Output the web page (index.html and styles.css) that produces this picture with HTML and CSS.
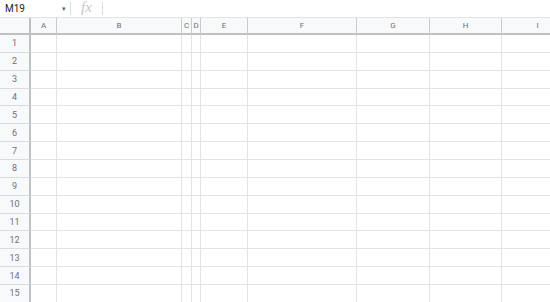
FILE: index.html
```html
<!DOCTYPE html>
<html>
<head>
  <meta charset="UTF-8">
  <title>Sheet</title>
  <link rel="stylesheet" href="styles.css">
</head>
<body>
  <div class="formula-bar">
    <div class="name-box">
      <span class="cell-ref">M19</span>
      <span class="caret">&#9662;</span>
    </div>
    <div class="fx">fx</div>
    <div class="formula-input"></div>
  </div>
  <div class="sheet" id="sheet">
    <div class="corner"></div>
    <div class="col-head">A</div>
    <div class="col-head">B</div>
    <div class="col-head">C</div>
    <div class="col-head">D</div>
    <div class="col-head">E</div>
    <div class="col-head">F</div>
    <div class="col-head">G</div>
    <div class="col-head">H</div>
    <div class="col-head">I</div>
  </div>
  <script>
    var sheet = document.getElementById('sheet');
    for (var r = 1; r <= 15; r++) {
      var head = document.createElement('div');
      head.className = 'row-head';
      head.innerText = r;
      sheet.appendChild(head);
      for (var c = 0; c < 9; c++) {
        var cell = document.createElement('div');
        cell.className = 'cell';
        sheet.appendChild(cell);
      }
    }
  </script>
</body>
</html>
```

FILE: styles.css
```css
body {
  margin: 0;
  padding: 0;
  font-family: Roboto, "Liberation Sans", Arial, sans-serif;
  background: #fff;
  overflow: hidden;
  width: 550px;
  height: 302px;
}
.formula-bar {
  display: flex;
  align-items: center;
  height: 17px;
  border-bottom: 1px solid #e2e3e3;
}
.name-box {
  display: flex;
  align-items: center;
  justify-content: space-between;
  width: 61px;
  height: 13px;
  padding: 0 4px 0 5px;
  border-right: 1px solid #dadce0;
}
.cell-ref {
  font-size: 10px;
  color: #222;
}
.caret {
  font-size: 7px;
  color: #5f6368;
}
.fx {
  font-family: "Liberation Serif", "Times New Roman", serif;
  font-style: italic;
  font-size: 15px;
  color: #c4c6c9;
  width: 31px;
  height: 13px;
  line-height: 11px;
  text-align: center;
  border-right: 1px solid #dadce0;
}
.formula-input {
  flex: 1;
}
.sheet {
  display: grid;
  grid-template-columns: 31px 26px 125px 10px 9px 47px 109px 73px 72px 72px;
  grid-template-rows: 17px;
  grid-auto-rows: 17.86px;
}
.corner {
  background: #f8f9fa;
  border-right: 2px solid #c0c0c0;
  border-bottom: 2px solid #c0c0c0;
}
.col-head {
  background: #f8f9fa;
  border-right: 1px solid #c9cbcd;
  border-bottom: 2px solid #c0c0c0;
  color: #707070;
  font-size: 8px;
  display: flex;
  align-items: center;
  justify-content: center;
}
.row-head {
  background: #f8f9fa;
  border-right: 2px solid #c0c0c0;
  border-bottom: 1px solid #dadce0;
  color: #707070;
  font-size: 9px;
  display: flex;
  align-items: center;
  justify-content: center;
}
.cell {
  border-right: 1px solid #e2e3e3;
  border-bottom: 1px solid #e2e3e3;
}
```
